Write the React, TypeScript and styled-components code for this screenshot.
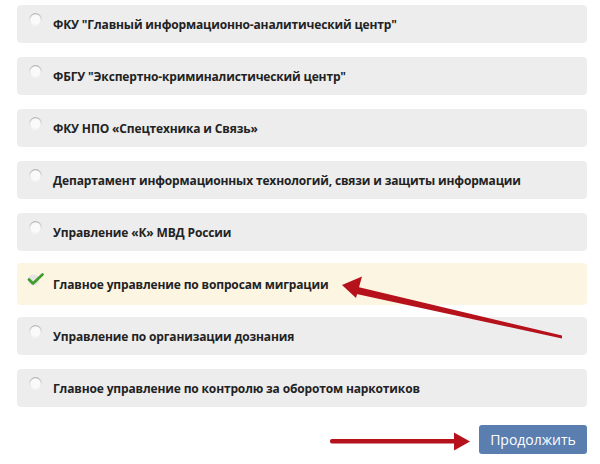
import React, { useState } from 'react';
import styled, { createGlobalStyle } from 'styled-components';

const GlobalStyle = createGlobalStyle`
  html, body {
    margin: 0;
    padding: 0;
    background: #ffffff;
  }
  body {
    font-family: "Open Sans", "Noto Sans", "Liberation Sans", sans-serif;
  }
`;

const options = [
  'ФКУ "Главный информационно-аналитический центр"',
  'ФБГУ "Экспертно-криминалистический центр"',
  'ФКУ НПО «Спецтехника и Связь»',
  'Департамент информационных технологий, связи и защиты информации',
  'Управление «К» МВД России',
  'Главное управление по вопросам миграции',
  'Управление по организации дознания',
  'Главное управление по контролю за оборотом наркотиков',
];

function Radio() {
  return (
    <svg width="13" height="13" viewBox="0 0 13 13">
      <defs>
        <linearGradient id="rs" x1="0" y1="0" x2="0" y2="1">
          <stop offset="0" stopColor="#b9b9b9" />
          <stop offset="0.55" stopColor="#e4e4e4" />
          <stop offset="1" stopColor="#f4f4f4" />
        </linearGradient>
      </defs>
      <circle cx="6.5" cy="6.5" r="5.8" fill="#fafafa" stroke="url(#rs)" strokeWidth="1.3" />
    </svg>
  );
}

function Check() {
  return (
    <svg width="17" height="13" viewBox="0 0 17 13">
      <circle cx="6.5" cy="7" r="5.5" fill="#e4e4e4" />
      <path d="M2 6.5 L6 10.5 L15.5 1.5" fill="none" stroke="#3f9b2a" strokeWidth="2.6" strokeLinecap="round" strokeLinejoin="round" />
    </svg>
  );
}

function Arrows() {
  return (
    <S.Overlay viewBox="0 0 600 464">
      <polygon points="562,335.5 358,287 356.5,294 562,338.5" fill="#b5121c" />
      <polygon points="342,285 362,276.5 356,298" fill="#b5121c" />
      <rect x="330" y="439" width="128" height="4.5" rx="2" fill="#b5121c" />
      <polygon points="470,441.5 454,432.5 454,450.5" fill="#b5121c" />
    </S.Overlay>
  );
}

function App() {
  const [selected, setSelected] = useState(5);

  return (
    <S.Page>
      <GlobalStyle />
      <S.List>
        {options.map((text, i) => (
          <S.Option key={text} $active={i === selected} onClick={() => setSelected(i)}>
            <S.Mark>{i === selected ? <Check /> : <Radio />}</S.Mark>
            <S.Label>{text}</S.Label>
          </S.Option>
        ))}
      </S.List>
      <S.Footer>
        <S.Button>Продолжить</S.Button>
      </S.Footer>
      <Arrows />
    </S.Page>
  );
}

const S = {
  Page: styled.div`
    position: relative;
    width: 600px;
    height: 464px;
    box-sizing: border-box;
    padding: 5px 13px 0 17px;
  `,
  List: styled.div`
    display: flex;
    flex-direction: column;
    gap: 14px;
  `,
  Option: styled.div<{ $active: boolean }>`
    display: flex;
    align-items: center;
    box-sizing: border-box;
    height: ${(p) => (p.$active ? '42px' : '38px')};
    margin: ${(p) => (p.$active ? '-2px 0' : '0')};
    padding-left: 10px;
    border-radius: 4px;
    background-color: ${(p) => (p.$active ? '#fcf5e2' : '#ededed')};
    cursor: pointer;
  `,
  Mark: styled.div`
    display: flex;
    align-items: center;
    justify-content: center;
    width: 17px;
    height: 13px;
    margin-right: 9px;
    margin-top: -9px;
  `,
  Label: styled.span`
    font-size: 12px;
    font-weight: 700;
    color: #222222;
    letter-spacing: -0.15px;
    padding-top: 1px;
  `,
  Footer: styled.div`
    display: flex;
    justify-content: flex-end;
    margin-top: 18px;
  `,
  Button: styled.button`
    width: 108px;
    height: 29px;
    border: none;
    border-radius: 3px;
    background-color: #5a7eb0;
    color: #ffffff;
    font-family: "Open Sans", "Liberation Sans", sans-serif;
    font-size: 14px;
    font-weight: 400;
    cursor: pointer;
  `,
  Overlay: styled.svg`
    position: absolute;
    top: 0;
    left: 0;
    width: 600px;
    height: 464px;
    pointer-events: none;
  `,
};

export default App;
